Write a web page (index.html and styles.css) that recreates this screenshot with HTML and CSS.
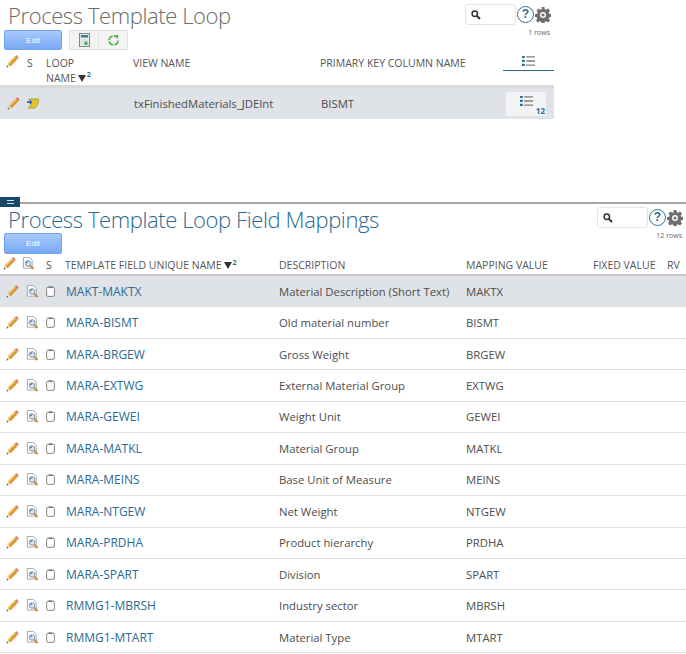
FILE: index.html
```html
<!DOCTYPE html>
<html lang="en">
<head>
<meta charset="utf-8">
<title>Process Template Loop</title>
<link rel="stylesheet" href="styles.css">
</head>
<body>
<svg class="defs" width="0" height="0" aria-hidden="true">
  <defs>
    <symbol id="pencil" viewBox="0 0 14 14">
      <path d="M.6 13.400l1.300-4.300 3 3z" fill="#f3dfb8"/>
      <path d="M.6 13.400l.6-2 1.400 1.400z" fill="#444"/>
      <path d="M1.900 9.100L9.300 1.700l3 3-7.300 7.400z" fill="#d9982e"/>
      <path d="M1.900 9.100L9.300 1.700l1.100 1.100L3 10.200z" fill="#f1c775"/>
      <path d="M9.500 1.500l.9-.8c.5-.4 1.100-.4 1.500 0l1.400 1.400c.4.400.4 1 0 1.400l-.9.900z" fill="#d77a70"/>
    </symbol>
    <symbol id="inspect" viewBox="0 0 14 14">
      <path d="M1.500.5h6.500l3 3v8.500h-9.500z" fill="#fff" stroke="#9aa5b1"/>
      <circle cx="6.500" cy="7" r="3" fill="#d7e6f5" stroke="#7a8b9c" stroke-width="1"/>
      <path d="M4.500 6.500l2-1.500" stroke="#5b86b0" stroke-width="1.500"/>
      <path d="M8.800 9.300l3.600 3.600" stroke="#c98a2d" stroke-width="2"/>
    </symbol>
    <symbol id="clip" viewBox="0 0 10 12">
      <rect x=".7" y="1.200" width="8.600" height="10.200" rx="1.500" fill="#fff" stroke="#777"/>
      <rect x="3" y=".4" width="4" height="1.800" fill="#777"/>
    </symbol>
    <symbol id="list" viewBox="0 0 14 12">
      <path d="M0 .5h3v2.400H0zM0 4.700h3v2.400H0zM0 8.900h3v2.400H0z" fill="#2f6d92"/>
      <path d="M4.500.7H14v.8H4.500zM4.500 2.100H14v.8H4.500zM4.500 4.900H14v.8H4.500zM4.500 6.300H14v.8H4.500zM4.500 9.100H14v.8H4.500zM4.500 10.500H14v.8H4.500z" fill="#808080"/>
    </symbol>
    <symbol id="search" viewBox="0 0 10 10">
      <circle cx="3.800" cy="3.800" r="2.700" fill="none" stroke="#333" stroke-width="1.500"/>
      <path d="M5.800 5.800l3.200 3.200" stroke="#333" stroke-width="2"/>
    </symbol>
    <symbol id="gear" viewBox="0 0 16 16">
      <path d="M6.600 0h2.800l.4 2.200 1.300.6 1.900-1.300 2 2-1.300 1.900.6 1.300 2.200.4v2.800l-2.200.4-.6 1.300 1.300 1.900-2 2-1.900-1.300-1.300.6-.4 2.200H6.600l-.4-2.200-1.300-.6L3 15.500l-2-2 1.300-1.900-.6-1.300L0 9.900V7.100l2.200-.4.6-1.300L1.500 3.500l2-2 1.900 1.300 1.300-.6z" fill="#6e6e6e"/>
      <circle cx="8" cy="8" r="3" fill="#fff"/>
      <circle cx="8" cy="8" r="1.600" fill="#6e6e6e"/>
    </symbol>
  </defs>
</svg>

<section class="panel panel-top">
  <div class="head head-top">
    <h1 class="title">Process Template Loop</h1>
    <div class="tools tools-top">
      <div class="tools-line">
        <div class="searchbox"><svg class="ico-search"><use href="#search"/></svg></div>
        <span class="help">?</span>
        <svg class="ico-gear"><use href="#gear"/></svg>
      </div>
      <div class="rows-count">1 rows</div>
    </div>
  </div>
  <div class="actions">
    <button class="edit" type="button">Edit</button>
    <div class="btn-group">
      <span class="group-btn">
        <svg width="11" height="14" viewBox="0 0 11 14"><rect x=".5" y=".5" width="10" height="13" fill="#e3ece8" stroke="#7d868c"/><rect x="2" y="2" width="7" height="2.500" fill="#3f7a9c"/><rect x="2" y="6" width="7" height="6" fill="#d5e8de"/><rect x="5.500" y="8.500" width="3" height="3.500" fill="#4fae6a"/></svg>
      </span>
      <span class="group-btn">
        <svg width="13" height="13" viewBox="0 0 16 16"><path d="M13.500 8a5.500 5.500 0 1 1-2-4.300" fill="none" stroke="#46b04a" stroke-width="2" stroke-dasharray="7 1.500"/><path d="M9.500 1l4.500.5-.8 4.500z" fill="#46b04a"/></svg>
      </span>
    </div>
  </div>
  <div class="grid grid-top grid-head">
    <span class="cell-ico head-pencil"><svg class="ico-pencil"><use href="#pencil"/></svg></span>
    <span>S</span>
    <span class="wrap-name">LOOP<br>NAME<i class="sort"></i><sup class="sort-n">2</sup></span>
    <span>VIEW NAME</span>
    <span>PRIMARY KEY COLUMN NAME</span>
    <span class="list-head"><svg class="ico-list"><use href="#list"/></svg></span>
  </div>
  <div class="grid grid-top row row-top selected">
    <span class="cell-ico"><svg class="ico-pencil"><use href="#pencil"/></svg></span>
    <span class="cell-ico">
      <svg width="12" height="11" viewBox="0 0 13 12"><path d="M2 1h10.500c.5 4-1 9-5 10H1c3-2 4-5 3-7z" fill="#e6c622" stroke="#8a7a18" stroke-width=".6"/><path d="M0 3.500h3V2l3 2.500L3 7V5.500H0z" fill="#2a62b8"/></svg>
    </span>
    <span></span>
    <span class="view-cell">txFinishedMaterials_JDEInt</span>
    <span class="key-cell">BISMT</span>
    <span class="list-btn"><svg class="ico-list"><use href="#list"/></svg><b class="list-n">12</b></span>
  </div>
</section>

<section class="panel panel-bottom">
  <span class="splitter-tab"><i></i></span>
  <div class="head head-bottom">
    <h1 class="title title-blue">Process Template Loop Field Mappings</h1>
    <div class="tools tools-bottom">
      <div class="tools-line">
        <div class="searchbox"><svg class="ico-search"><use href="#search"/></svg></div>
        <span class="help">?</span>
        <svg class="ico-gear"><use href="#gear"/></svg>
      </div>
      <div class="rows-count">12 rows</div>
    </div>
  </div>
  <div class="actions actions-b">
    <button class="edit" type="button">Edit</button>
  </div>
  <div class="grid grid-bottom grid-head-b">
    <span class="cell-ico"><svg class="ico-pencil"><use href="#pencil"/></svg></span>
    <span class="cell-ico"><svg class="ico-inspect"><use href="#inspect"/></svg></span>
    <span class="s-head">S</span>
    <span>TEMPLATE FIELD UNIQUE NAME<i class="sort"></i><sup class="sort-n">2</sup></span>
    <span>DESCRIPTION</span>
    <span>MAPPING VALUE</span>
    <span>FIXED VALUE</span>
    <span>RV</span>
  </div>
  <div class="grid grid-bottom row selected"><span class="cell-ico"><svg class="ico-pencil"><use href="#pencil"/></svg></span><span class="cell-ico"><svg class="ico-inspect"><use href="#inspect"/></svg></span><span class="cell-ico"><svg class="ico-clip"><use href="#clip"/></svg></span><a class="link">MAKT-MAKTX</a><span>Material Description (Short Text)</span><span>MAKTX</span><span></span><span></span></div>
  <div class="grid grid-bottom row"><span class="cell-ico"><svg class="ico-pencil"><use href="#pencil"/></svg></span><span class="cell-ico"><svg class="ico-inspect"><use href="#inspect"/></svg></span><span class="cell-ico"><svg class="ico-clip"><use href="#clip"/></svg></span><a class="link">MARA-BISMT</a><span>Old material number</span><span>BISMT</span><span></span><span></span></div>
  <div class="grid grid-bottom row"><span class="cell-ico"><svg class="ico-pencil"><use href="#pencil"/></svg></span><span class="cell-ico"><svg class="ico-inspect"><use href="#inspect"/></svg></span><span class="cell-ico"><svg class="ico-clip"><use href="#clip"/></svg></span><a class="link">MARA-BRGEW</a><span>Gross Weight</span><span>BRGEW</span><span></span><span></span></div>
  <div class="grid grid-bottom row"><span class="cell-ico"><svg class="ico-pencil"><use href="#pencil"/></svg></span><span class="cell-ico"><svg class="ico-inspect"><use href="#inspect"/></svg></span><span class="cell-ico"><svg class="ico-clip"><use href="#clip"/></svg></span><a class="link">MARA-EXTWG</a><span>External Material Group</span><span>EXTWG</span><span></span><span></span></div>
  <div class="grid grid-bottom row"><span class="cell-ico"><svg class="ico-pencil"><use href="#pencil"/></svg></span><span class="cell-ico"><svg class="ico-inspect"><use href="#inspect"/></svg></span><span class="cell-ico"><svg class="ico-clip"><use href="#clip"/></svg></span><a class="link">MARA-GEWEI</a><span>Weight Unit</span><span>GEWEI</span><span></span><span></span></div>
  <div class="grid grid-bottom row"><span class="cell-ico"><svg class="ico-pencil"><use href="#pencil"/></svg></span><span class="cell-ico"><svg class="ico-inspect"><use href="#inspect"/></svg></span><span class="cell-ico"><svg class="ico-clip"><use href="#clip"/></svg></span><a class="link">MARA-MATKL</a><span>Material Group</span><span>MATKL</span><span></span><span></span></div>
  <div class="grid grid-bottom row"><span class="cell-ico"><svg class="ico-pencil"><use href="#pencil"/></svg></span><span class="cell-ico"><svg class="ico-inspect"><use href="#inspect"/></svg></span><span class="cell-ico"><svg class="ico-clip"><use href="#clip"/></svg></span><a class="link">MARA-MEINS</a><span>Base Unit of Measure</span><span>MEINS</span><span></span><span></span></div>
  <div class="grid grid-bottom row"><span class="cell-ico"><svg class="ico-pencil"><use href="#pencil"/></svg></span><span class="cell-ico"><svg class="ico-inspect"><use href="#inspect"/></svg></span><span class="cell-ico"><svg class="ico-clip"><use href="#clip"/></svg></span><a class="link">MARA-NTGEW</a><span>Net Weight</span><span>NTGEW</span><span></span><span></span></div>
  <div class="grid grid-bottom row"><span class="cell-ico"><svg class="ico-pencil"><use href="#pencil"/></svg></span><span class="cell-ico"><svg class="ico-inspect"><use href="#inspect"/></svg></span><span class="cell-ico"><svg class="ico-clip"><use href="#clip"/></svg></span><a class="link">MARA-PRDHA</a><span>Product hierarchy</span><span>PRDHA</span><span></span><span></span></div>
  <div class="grid grid-bottom row"><span class="cell-ico"><svg class="ico-pencil"><use href="#pencil"/></svg></span><span class="cell-ico"><svg class="ico-inspect"><use href="#inspect"/></svg></span><span class="cell-ico"><svg class="ico-clip"><use href="#clip"/></svg></span><a class="link">MARA-SPART</a><span>Division</span><span>SPART</span><span></span><span></span></div>
  <div class="grid grid-bottom row"><span class="cell-ico"><svg class="ico-pencil"><use href="#pencil"/></svg></span><span class="cell-ico"><svg class="ico-inspect"><use href="#inspect"/></svg></span><span class="cell-ico"><svg class="ico-clip"><use href="#clip"/></svg></span><a class="link">RMMG1-MBRSH</a><span>Industry sector</span><span>MBRSH</span><span></span><span></span></div>
  <div class="grid grid-bottom row"><span class="cell-ico"><svg class="ico-pencil"><use href="#pencil"/></svg></span><span class="cell-ico"><svg class="ico-inspect"><use href="#inspect"/></svg></span><span class="cell-ico"><svg class="ico-clip"><use href="#clip"/></svg></span><a class="link">RMMG1-MTART</a><span>Material Type</span><span>MTART</span><span></span><span></span></div>
</section>
</body>
</html>
```
FILE: styles.css
```css
html, body { margin: 0; padding: 0; height: 654px; overflow: hidden; background: #fff; }
body { font-family: "Open Sans", "Noto Sans", sans-serif; font-size: 11.300px; color: #4d4d4d; }
.defs { position: absolute; }
.panel-top { width: 554px; height: 202px; }
.panel-bottom { position: relative; width: 686px; border-top: 2px solid #a6a6a6; }
.head { display: flex; justify-content: space-between; align-items: flex-start; }
.head-top { height: 30px; }
.head-bottom { height: 29px; }
.title { margin: 0 0 0 8px; font-size: 22px; line-height: 30px; letter-spacing: -0.400px; font-weight: 300; color: #6a6a6a; white-space: nowrap; }
.title-blue { color: #2a6a92; }
.tools { display: flex; flex-direction: column; align-items: flex-end; padding-right: 3px; }
.tools-top { padding-top: 4px; }
.tools-bottom { padding-top: 3px; }
.tools-line { display: flex; align-items: center; gap: 1px; }
.searchbox { width: 51px; height: 21px; box-sizing: border-box; border: 1px solid #e3e3e3; border-radius: 3px; display: flex; align-items: center; padding-left: 5px; }
.ico-search { width: 10px; height: 10px; }
.help { width: 15px; height: 15px; border: 1.500px solid #2f6d92; border-radius: 50%; color: #2f6d92; font: bold 12px/15px "Liberation Sans", sans-serif; text-align: center; }
.ico-gear { width: 16px; height: 16px; }
.rows-count { font-size: 7px; line-height: 10px; margin-top: 3px; color: #666; padding-right: 1px; }
.actions { display: flex; gap: 7px; margin-left: 4px; height: 20px; }
.actions-b { height: 21px; }
.edit { width: 58px; height: 100%; padding: 0; border: 1px solid #6fa3ef; border-radius: 2px; background: linear-gradient(#a9c9fb, #78a9f5); color: #fff; font: 8px "Liberation Sans", sans-serif; }
.btn-group { display: flex; border: 1px solid #e0e0e0; background: #f3f3f3; }
.group-btn { width: 28px; display: flex; align-items: center; justify-content: center; }
.group-btn + .group-btn { border-left: 1px solid #e0e0e0; }
.grid { display: grid; align-items: center; }
.grid span, .grid a { white-space: nowrap; }
.grid-top { grid-template-columns: 27px 19px 87px 187px 183px 51px; }
.grid-head { height: 29px; font-size: 10.500px; line-height: 14.500px; color: #555; border-bottom: 3px solid #d9d9d9; align-items: start; padding-top: 6px; }
.head-pencil { padding-left: 4px; margin-top: -1px; }
.list-head { border-bottom: 1px solid #2f6d92; height: 14px; display: flex; justify-content: center; }
.list-head .ico-list { margin-top: -1px; }
.wrap-name { grid-column: 3; }
.sort { display: inline-block; width: 0; height: 0; border-left: 4.500px solid transparent; border-right: 4.500px solid transparent; border-top: 7px solid #333; margin-left: 2px; }
.sort-n { font-size: 7px; color: #2f6d92; line-height: 0; font-weight: bold; margin-left: 1px; }
.row { height: 31.450px; box-sizing: border-box; border-bottom: 1px solid #dfdfdf; }
.row-top { height: 31px; border-bottom: 0; }
.selected { background: #dfe2e6; }
.cell-ico { display: flex; align-items: center; padding-left: 6px; }
.row-top .cell-ico:first-child { padding-left: 7px; }
.row-top .cell-ico + .cell-ico { padding-left: 0; }
.view-cell { margin-left: 1px; }
.key-cell { margin-left: 1px; }
.ico-pencil { width: 13px; height: 13px; display: block; }
.ico-inspect { width: 13px; height: 13px; display: block; }
.ico-clip { width: 9px; height: 11px; display: block; }
.ico-list { width: 13px; height: 12px; display: block; }
.list-btn { position: relative; width: 40px; height: 24px; margin-left: 3px; background: #f3f3f3; display: flex; align-items: flex-start; justify-content: center; padding-top: 3px; box-sizing: border-box; }
.list-n { position: absolute; right: 1px; bottom: 0; font-size: 8px; line-height: 10px; color: #2f6d92; }
.splitter-tab { position: absolute; left: 0; top: -7px; width: 20px; height: 10px; background: #17486a; display: flex; align-items: center; justify-content: center; }
.splitter-tab i { width: 7px; height: 2px; border-top: 1px solid #cfe0ea; border-bottom: 1px solid #cfe0ea; }
.grid-bottom { grid-template-columns: 20px 22px 23px 214px 187px 127px 74px 19px; }
.grid-head-b { height: 18px; font-size: 10.500px; color: #555; border-bottom: 2px solid #c9c9c9; padding-top: 2px; }
.grid-head-b .cell-ico { padding-left: 3px; margin-top: -4px; }
.grid-head-b .cell-ico + .cell-ico { padding-left: 2px; }
.s-head { padding-left: 4px; }
.row .cell-ico:nth-child(3) { padding-left: 4px; }
.row .link { color: #2a6a92; font-size: 12px; margin-left: 1px; }
```
